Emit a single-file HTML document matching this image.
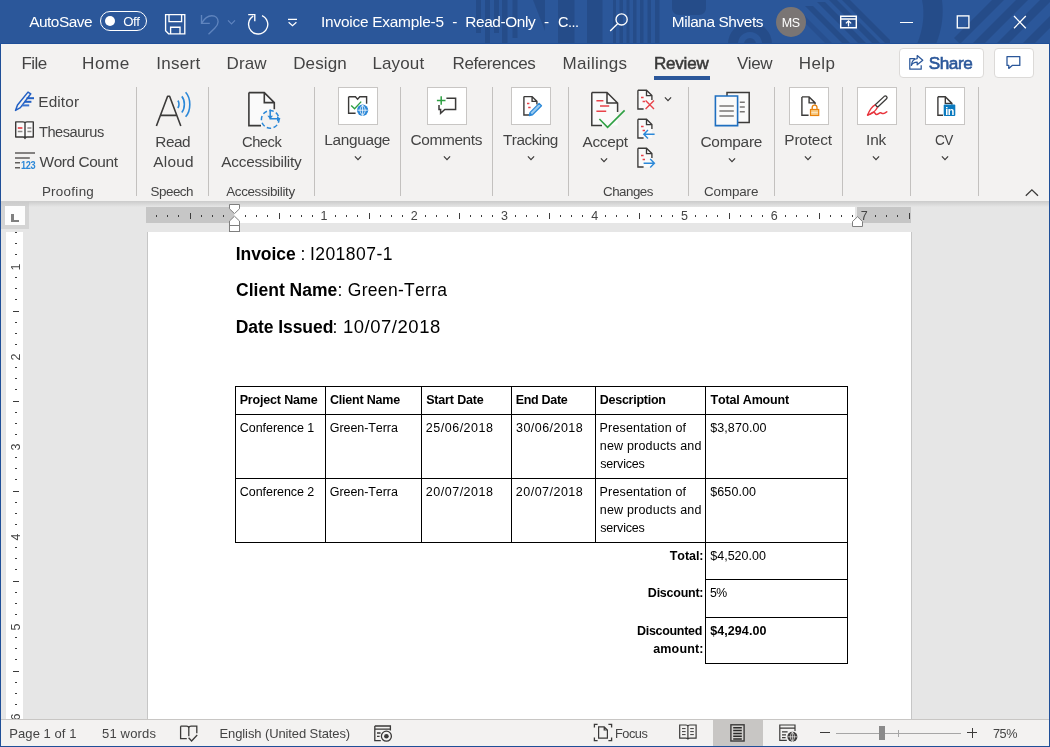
<!DOCTYPE html>
<html lang="en"><head><meta charset="utf-8"><title>Invoice Example-5 - Read-Only - Word</title>
<style>
html,body{margin:0;padding:0;}
body{width:1050px;height:747px;overflow:hidden;position:relative;background:#e6e6e6;font-family:"Liberation Sans", sans-serif;}
#app{position:absolute;left:0;top:0;width:1050px;height:747px;overflow:hidden;will-change:transform;}
#app span{display:block;font-kerning:none;}
</style></head><body><div id="app">
<div style="position:absolute;left:0px;top:0px;width:1050px;height:44px;background:#2b579a;"></div>
<div style="position:absolute;left:0px;top:44px;width:1050px;height:157px;background:#f3f2f1;"></div>
<div style="position:absolute;left:0px;top:201px;width:1050px;height:6px;background:linear-gradient(#cbcbcb,#e6e6e6);"></div>
<div style="position:absolute;left:0px;top:719px;width:1050px;height:28px;background:#f3f2f1;"></div>
<div style="position:absolute;left:0px;top:719px;width:1050px;height:1px;background:#c8c6c4;"></div>
<svg style="position:absolute;left:0px;top:0px;" width="1050" height="44" viewBox="0 0 1050 44" fill="none">
<g fill="#1d3c70" opacity="0.38">
<rect x="476" y="0" width="5" height="33"/><rect x="485" y="0" width="5" height="44"/><rect x="494" y="0" width="5" height="33"/><rect x="502" y="0" width="5.500" height="44"/><rect x="512.500" y="0" width="5" height="38"/>
<path d="M533 0h12v31z"/>
<rect x="558" y="0" width="16.500" height="44"/><rect x="587" y="0" width="15.500" height="44"/>
<rect x="613" y="0" width="3" height="44"/><rect x="619.500" y="0" width="3.500" height="44"/><rect x="626.500" y="0" width="3" height="44"/><rect x="633" y="0" width="3.500" height="44"/><rect x="640" y="0" width="3.500" height="44"/><rect x="647.500" y="0" width="3.500" height="44"/><rect x="655" y="0" width="4.500" height="44"/>
<path d="M672 0h34v8c0 4-3 7-7 7h-20c-4 0-7-3-7-7z"/>
<path d="M728 44a22 22 0 0 1 44 0h-10a12 12 0 0 0-24 0z"/><path d="M744 44a6 6 0 0 1 12 0z"/>
<path d="M805 6h8l38 38h-8z"/><path d="M817 2h8l42 42h-8z"/><path d="M829 0h8l44 44h-8z"/><path d="M842 0h8l40 40v4h-4z"/><path d="M796 14h7l30 30h-7z" opacity=".7"/>
<path d="M922 0h20c2 14 0 30-6 44h-19c6-14 8-30 5-44z"/>
<path d="M954 38l38-38h12l-44 44z"/><path d="M972 44l44-44h12l-44 44z"/><path d="M996 44l44-44h10v2l-42 42z"/><path d="M1022 44l28-28v12l-16 16z"/>
</g></svg>
<span style="position:absolute;left:29.27px;top:11.00px;font-size:15.4px;line-height:22px;font-weight:400;color:#fff;letter-spacing:-0.500px;white-space:pre;">AutoSave</span>
<div style="position:absolute;left:100px;top:11px;width:45px;height:18px;border:1.2px solid #fff;border-radius:11px;"></div>
<div style="position:absolute;left:104.500px;top:15.700px;width:10.500px;height:10.500px;border-radius:50%;background:#fff;"></div>
<span style="position:absolute;left:123.17px;top:12.02px;font-size:13.2px;line-height:19px;font-weight:400;color:#fff;letter-spacing:-0.448px;white-space:pre;">Off</span>
<svg style="position:absolute;left:164px;top:13px;" width="22" height="22" viewBox="0 0 22 22" fill="none"><path d="M1.6 1.6h19.2v19.2H4.6l-3-3z M5 1.6v7h12.6v-7 M6.6 20.8v-6.6h9.4v6.6" stroke="#fff" stroke-width="1.35"/></svg>
<svg style="position:absolute;left:199px;top:12px;" width="22" height="24" viewBox="0 0 22 24" fill="none"><path d="M2.5 3v8.3h8.3 M2.8 11c2.5-4.5 6-7.3 10-7.3 4 0 6.3 2.6 6.3 6 0 2.5-1.2 4.4-3.4 6.6l-6.2 6" stroke="#5f84be" stroke-width="1.35"/></svg>
<svg style="position:absolute;left:227px;top:19px;" width="9" height="7" viewBox="0 0 9 7" fill="none"><path d="M1 1.3l3.5 3.5L8 1.3" stroke="#5f84be" stroke-width="1.2"/></svg>
<svg style="position:absolute;left:246px;top:12px;" width="24" height="24" viewBox="0 0 24 24" fill="none"><path d="M7.2 4.2A9.6 9.6 0 1 0 16 3.6 M2.2 2.6h6.6v6.6" stroke="#fff" stroke-width="1.35"/></svg>
<svg style="position:absolute;left:287px;top:18px;" width="11" height="9" viewBox="0 0 11 9" fill="none"><path d="M1 1.4h9 M1.6 4.2l3.9 3.6 3.9-3.6" stroke="#fff" stroke-width="1.2"/></svg>
<span style="position:absolute;left:321.08px;top:11.00px;font-size:15.4px;line-height:22px;font-weight:400;color:#fff;letter-spacing:-0.232px;white-space:pre;">Invoice Example-5</span>
<span style="position:absolute;left:452.32px;top:11.00px;font-size:15.4px;line-height:22px;font-weight:400;color:#fff;letter-spacing:0.000px;white-space:pre;">-</span>
<span style="position:absolute;left:465.34px;top:11.00px;font-size:15.4px;line-height:22px;font-weight:400;color:#fff;letter-spacing:-0.402px;white-space:pre;">Read-Only</span>
<span style="position:absolute;left:544.12px;top:11.00px;font-size:15.4px;line-height:22px;font-weight:400;color:#fff;letter-spacing:0.000px;white-space:pre;">-</span>
<span style="position:absolute;left:557.86px;top:11.00px;font-size:15.4px;line-height:22px;font-weight:400;color:#fff;letter-spacing:-0.500px;white-space:pre;transform:scaleX(0.9423);transform-origin:0 0;">C...</span>
<svg style="position:absolute;left:609px;top:12px;" width="20" height="20" viewBox="0 0 20 20" fill="none"><circle cx="12.6" cy="7.4" r="5.6" stroke="#fff" stroke-width="1.35"/><path d="M8.8 11.4L1.2 19" stroke="#fff" stroke-width="1.35"/></svg>
<span style="position:absolute;left:671.74px;top:11.00px;font-size:15.4px;line-height:22px;font-weight:400;color:#fff;letter-spacing:-0.409px;white-space:pre;">Milana Shvets</span>
<div style="position:absolute;left:776px;top:7px;width:30px;height:30px;border-radius:50%;background:#7a7574;"></div>
<span style="position:absolute;left:781.77px;top:14.01px;font-size:12.5px;line-height:18px;font-weight:400;color:#fff;letter-spacing:-0.351px;white-space:pre;">MS</span>
<svg style="position:absolute;left:839px;top:15px;" width="19" height="14" viewBox="0 0 19 14" fill="none"><path d="M1.700 1.300h15.600v11.400H1.700z M1.700 4h15.600" stroke="#fff" stroke-width="1.450"/><path d="M9.500 11.400V6 M6.900 8.400l2.600-2.600L12.100 8.400" stroke="#fff" stroke-width="1.300"/></svg>
<div style="position:absolute;left:899.5px;top:22.2px;width:13px;height:1.3px;background:#fff;"></div>
<svg style="position:absolute;left:956px;top:15px;" width="15" height="15" viewBox="0 0 15 15" fill="none"><rect x="1.300" y="0.900" width="11.600" height="12" stroke="#fff" stroke-width="1.350"/></svg>
<svg style="position:absolute;left:1012px;top:15px;" width="16" height="15" viewBox="0 0 16 15" fill="none"><path d="M2 1l11.800 12.200 M13.800 1L2 13.200" stroke="#fff" stroke-width="1.300"/></svg>
<span style="position:absolute;left:21.41px;top:52.00px;font-size:17px;line-height:24px;font-weight:400;color:#444;letter-spacing:-0.500px;white-space:pre;">File</span>
<span style="position:absolute;left:82.39px;top:52.00px;font-size:17px;line-height:24px;font-weight:400;color:#444;letter-spacing:0.500px;white-space:pre;transform:scaleX(1.0112);transform-origin:0 0;">Home</span>
<span style="position:absolute;left:156.23px;top:52.00px;font-size:17px;line-height:24px;font-weight:400;color:#444;letter-spacing:0.275px;white-space:pre;">Insert</span>
<span style="position:absolute;left:226.61px;top:52.00px;font-size:17px;line-height:24px;font-weight:400;color:#444;letter-spacing:0.095px;white-space:pre;">Draw</span>
<span style="position:absolute;left:293.21px;top:52.00px;font-size:17px;line-height:24px;font-weight:400;color:#444;letter-spacing:0.116px;white-space:pre;">Design</span>
<span style="position:absolute;left:372.41px;top:52.00px;font-size:17px;line-height:24px;font-weight:400;color:#444;letter-spacing:0.136px;white-space:pre;">Layout</span>
<span style="position:absolute;left:452.61px;top:52.00px;font-size:17px;line-height:24px;font-weight:400;color:#444;letter-spacing:-0.414px;white-space:pre;">References</span>
<span style="position:absolute;left:562.61px;top:52.00px;font-size:17px;line-height:24px;font-weight:400;color:#444;letter-spacing:0.293px;white-space:pre;">Mailings</span>
<span style="position:absolute;left:736.93px;top:52.00px;font-size:17px;line-height:24px;font-weight:400;color:#444;letter-spacing:-0.405px;white-space:pre;">View</span>
<span style="position:absolute;left:798.81px;top:52.00px;font-size:17px;line-height:24px;font-weight:400;color:#444;letter-spacing:0.382px;white-space:pre;">Help</span>
<span style="position:absolute;left:653.91px;top:52.00px;font-size:17px;line-height:24px;font-weight:400;color:#3a3a3a;letter-spacing:-0.197px;white-space:pre;-webkit-text-stroke:0.55px #3a3a3a;">Review</span>
<div style="position:absolute;left:654px;top:76px;width:56px;height:3.5px;background:#2b579a;"></div>
<div style="position:absolute;left:899px;top:48px;width:82.500px;height:28px;border:1px solid #dcdad8;border-radius:4px;background:#fff;"></div>
<svg style="position:absolute;left:907.8px;top:54px;" width="17" height="17" viewBox="0 0 17 17" fill="none"><path d="M7 4.6H1.8v10.6h11.4v-4 M9.2 1.6l5.6 4.6-5.6 4.6V8.2c-3 0-4.8 1.2-5.8 3.2.2-4 2.4-6.4 5.8-6.8z" stroke="#2b579a" stroke-width="1.25" stroke-linejoin="round"/></svg>
<span style="position:absolute;left:928.72px;top:51.01px;font-size:17.2px;line-height:25px;font-weight:400;color:#2b579a;letter-spacing:-0.463px;white-space:pre;-webkit-text-stroke:0.6px #2b579a;">Share</span>
<div style="position:absolute;left:994px;top:48px;width:37.500px;height:28px;border:1px solid #dcdad8;border-radius:4px;background:#fff;"></div>
<svg style="position:absolute;left:1005px;top:55px;" width="17" height="15" viewBox="0 0 17 15" fill="none"><path d="M2 1.600h12.800v8.800H7.200L3.800 13.400V10.400H2z" stroke="#2b579a" stroke-width="1.3" stroke-linejoin="round"/></svg>
<div style="position:absolute;left:136px;top:87px;width:1px;height:109px;background:#c3c1bf;"></div>
<div style="position:absolute;left:208px;top:87px;width:1px;height:109px;background:#c3c1bf;"></div>
<div style="position:absolute;left:314px;top:87px;width:1px;height:109px;background:#c3c1bf;"></div>
<div style="position:absolute;left:400px;top:87px;width:1px;height:109px;background:#c3c1bf;"></div>
<div style="position:absolute;left:492px;top:87px;width:1px;height:109px;background:#c3c1bf;"></div>
<div style="position:absolute;left:568px;top:87px;width:1px;height:109px;background:#c3c1bf;"></div>
<div style="position:absolute;left:688px;top:87px;width:1px;height:109px;background:#c3c1bf;"></div>
<div style="position:absolute;left:774px;top:87px;width:1px;height:109px;background:#c3c1bf;"></div>
<div style="position:absolute;left:842px;top:87px;width:1px;height:109px;background:#c3c1bf;"></div>
<div style="position:absolute;left:910px;top:87px;width:1px;height:109px;background:#c3c1bf;"></div>
<div style="position:absolute;left:978px;top:87px;width:1px;height:109px;background:#c3c1bf;"></div>
<svg style="position:absolute;left:14px;top:90px;" width="22" height="22" viewBox="0 0 22 22" fill="none"><path d="M1.500 20.400l2-5.400L14 2.100l2.800 1.700L6.400 17.600z" stroke="#2260c4" stroke-width="1.500" stroke-linejoin="round" fill="#f3f2f1"/><path d="M12.600 8.200h7.400" stroke="#2260c4" stroke-width="2"/><path d="M10.600 11.800h6.800" stroke="#2260c4" stroke-width="2"/><path d="M8 15.400h7.200" stroke="#3a74d0" stroke-width="2"/></svg>
<span style="position:absolute;left:38.34px;top:91.00px;font-size:15.4px;line-height:22px;font-weight:400;color:#444;letter-spacing:0.098px;white-space:pre;">Editor</span>
<svg style="position:absolute;left:14px;top:120px;" width="22" height="21" viewBox="0 0 22 21" fill="none"><path d="M1.700 1.900h7.300c1.200 0 2 .5 2 1.400v15.200c0-.9-.8-1.500-2-1.500H1.700z M19.300 1.900H13c-1.200 0-2 .5-2 1.400v15.200c0-.9.8-1.500 2-1.500h6.300z" stroke="#3b3a39" stroke-width="1.400" fill="#fafafa" stroke-linejoin="round"/><path d="M3.800 8h4.600" stroke="#e8434a" stroke-width="1.700"/><path d="M3.800 11.600h4.600 M13.400 8h4 M13.400 11.600h4" stroke="#8a8886" stroke-width="1.500"/></svg>
<span style="position:absolute;left:39.27px;top:121.00px;font-size:15.4px;line-height:22px;font-weight:400;color:#444;letter-spacing:-0.500px;white-space:pre;transform:scaleX(0.9491);transform-origin:0 0;">Thesaurus</span>
<svg style="position:absolute;left:14px;top:150px;" width="22" height="20" viewBox="0 0 22 20" fill="none"><path d="M1 3h20 M1 8h14.800 M1 12.800h5 M1 17.800h5" stroke="#605e5c" stroke-width="1.600"/></svg>
<span style="position:absolute;left:20.92px;top:158.01px;font-size:10.6px;line-height:15px;font-weight:700;color:#2b88d8;letter-spacing:-0.500px;white-space:pre;transform:scaleX(0.8698);transform-origin:0 0;">123</span>
<span style="position:absolute;left:39.53px;top:151.00px;font-size:15.4px;line-height:22px;font-weight:400;color:#444;letter-spacing:-0.409px;white-space:pre;">Word Count</span>
<span style="position:absolute;left:41.90px;top:182.01px;font-size:13.4px;line-height:19px;font-weight:400;color:#444;letter-spacing:0.293px;white-space:pre;">Proofing</span>
<svg style="position:absolute;left:154px;top:90px;" width="40" height="38" viewBox="0 0 40 38" fill="none"><path d="M2.400 36L13.600 6.200h2L26.800 36 M6.800 25.400h15.600" stroke="#3b3a39" stroke-width="1.600" stroke-linejoin="round"/><path d="M23.800 10.600c1.600 1.800 1.600 5.400 0 7.400 M27.800 6.400c3.400 3.800 3.400 12 0 16 M31.600 2.200c5.600 6 5.600 18.400 0 24.600" stroke="#2b88d8" stroke-width="1.600"/></svg>
<span style="position:absolute;left:155.34px;top:131.00px;font-size:15.4px;line-height:22px;font-weight:400;color:#444;letter-spacing:-0.487px;white-space:pre;">Read</span>
<span style="position:absolute;left:153.37px;top:151.00px;font-size:15.4px;line-height:22px;font-weight:400;color:#444;letter-spacing:0.209px;white-space:pre;">Aloud</span>
<span style="position:absolute;left:150.59px;top:182.01px;font-size:13.4px;line-height:19px;font-weight:400;color:#444;letter-spacing:-0.500px;white-space:pre;">Speech</span>
<svg style="position:absolute;left:246px;top:90px;" width="38" height="42" viewBox="0 0 38 42" fill="none"><path d="M2.900 2.600h15.400l10 10v23H2.900z" fill="#fafafa"/><path d="M2.900 2.600h15.400l10 10v6.600 M18.300 2.600v10h10 M15 35.600H2.900V2.600" stroke="#3b3a39" stroke-width="1.600" fill="none"/><circle cx="24.200" cy="29.400" r="8.800" stroke="#2b88d8" stroke-width="1.500" stroke-dasharray="4.400 2.500" stroke-dashoffset="1" fill="#f3f2f1"/><path d="M24.200 19.600v9.200h9.600" stroke="#2b88d8" stroke-width="1.500"/><path d="M21.400 25.800l2.800 3.400 2.800-3.400z M31 26.200l3.600 2.600-3.600 2.600z" fill="#2b88d8"/></svg>
<span style="position:absolute;left:241.65px;top:131.00px;font-size:15.4px;line-height:22px;font-weight:400;color:#444;letter-spacing:-0.500px;white-space:pre;transform:scaleX(0.9562);transform-origin:0 0;">Check</span>
<span style="position:absolute;left:221.37px;top:151.00px;font-size:15.4px;line-height:22px;font-weight:400;color:#444;letter-spacing:-0.292px;white-space:pre;">Accessibility</span>
<span style="position:absolute;left:226.17px;top:182.01px;font-size:13.4px;line-height:19px;font-weight:400;color:#444;letter-spacing:-0.327px;white-space:pre;">Accessibility</span>
<div style="position:absolute;left:338px;top:87px;width:38px;height:36px;border:1px solid #c8c6c4;background:#fff;"></div>
<svg style="position:absolute;left:346px;top:94px;" width="24" height="24" viewBox="0 0 24 24" fill="none"><path d="M2.600 2.800h6.800l2.200 2.400 2.200-2.400h6.800v7 M2.600 2.800v16.400h7" stroke="#3b3a39" stroke-width="1.400"/><path d="M5.200 11.400l3.400 3.400 6.600-7.200" stroke="#2ea043" stroke-width="1.400"/><circle cx="16.600" cy="16.200" r="5.600" fill="#2b88d8"/><path d="M11.400 16.200h10.400 M16.600 11v10.400 M16.600 11c-3.400 3.200-3.400 7.200 0 10.400 M16.600 11c3.400 3.200 3.400 7.200 0 10.400" stroke="#fff" stroke-width=".8"/></svg>
<span style="position:absolute;left:324.34px;top:129.00px;font-size:15.4px;line-height:22px;font-weight:400;color:#444;letter-spacing:-0.339px;white-space:pre;">Language</span>
<svg style="position:absolute;left:351.6px;top:154.29999999999998px;" width="12" height="8" viewBox="0 0 12 8" fill="none"><path d="M2.9 2.45L6 5.55L9.1 2.45" stroke="#3b3a39" stroke-width="1.2"/></svg>
<div style="position:absolute;left:427px;top:87px;width:38px;height:36px;border:1px solid #c8c6c4;background:#fff;"></div>
<svg style="position:absolute;left:435px;top:94px;" width="24" height="22" viewBox="0 0 24 22" fill="none"><path d="M11.400 4.200h9.200v11.200H9.800L5.600 19.200v-3.800H4V11" stroke="#3b3a39" stroke-width="1.500"/><path d="M6.200 2.200v8.600 M1.900 6.500h8.600" stroke="#2ea043" stroke-width="1.500"/></svg>
<span style="position:absolute;left:410.62px;top:129.00px;font-size:15.4px;line-height:22px;font-weight:400;color:#444;letter-spacing:-0.373px;white-space:pre;">Comments</span>
<svg style="position:absolute;left:440.6px;top:154.29999999999998px;" width="12" height="8" viewBox="0 0 12 8" fill="none"><path d="M2.9 2.45L6 5.55L9.1 2.45" stroke="#3b3a39" stroke-width="1.2"/></svg>
<div style="position:absolute;left:511px;top:87px;width:38px;height:36px;border:1px solid #c8c6c4;background:#fff;"></div>
<svg style="position:absolute;left:521px;top:94px;" width="24" height="24" viewBox="0 0 24 24" fill="none"><path d="M2.900 2.600h8.200l4.800 4.800v3 M11.100 2.600v4.800h4.800 M8 21H2.900V2.600" stroke="#3b3a39" stroke-width="1.400" fill="none"/><path d="M6 9.600h2.400 M7.200 13.400h2.400" stroke="#e8434a" stroke-width="1.500"/><path d="M8.300 21.600l.8-3.200 9-9 2.400 2.400-9 9z" stroke="#2b88d8" stroke-width="1.250" fill="#9ccbf0" stroke-linejoin="round"/><path d="M8.300 21.600l.8-3.200 2.400 2.400z" fill="#2b88d8"/></svg>
<span style="position:absolute;left:503.26px;top:129.00px;font-size:15.4px;line-height:22px;font-weight:400;color:#444;letter-spacing:-0.500px;white-space:pre;transform:scaleX(0.9961);transform-origin:0 0;">Tracking</span>
<svg style="position:absolute;left:524.6px;top:154.29999999999998px;" width="12" height="8" viewBox="0 0 12 8" fill="none"><path d="M2.9 2.45L6 5.55L9.1 2.45" stroke="#3b3a39" stroke-width="1.2"/></svg>
<svg style="position:absolute;left:588px;top:90px;" width="40" height="40" viewBox="0 0 40 40" fill="none"><path d="M3.800 2.400h15.200l10.600 10.600v22.600H3.800z" fill="#fafafa"/><path d="M3.800 2.400h15.200l10.600 10.600v9 M19 2.400v10.600h10.600 M14 35.600H3.800V2.400" stroke="#3b3a39" stroke-width="1.500" fill="none"/><path d="M8.400 10.800h7 M12 16h9.200 M8.400 21.200h9.800" stroke="#e8434a" stroke-width="1.500"/><path d="M11.400 29l8.200 8.400 17-17" stroke="#2ea043" stroke-width="1.600" fill="none"/></svg>
<span style="position:absolute;left:582.47px;top:131.00px;font-size:15.4px;line-height:22px;font-weight:400;color:#444;letter-spacing:-0.307px;white-space:pre;">Accept</span>
<svg style="position:absolute;left:598.3px;top:155.89999999999998px;" width="12" height="8" viewBox="0 0 12 8" fill="none"><path d="M2.9 2.45L6 5.55L9.1 2.45" stroke="#3b3a39" stroke-width="1.2"/></svg>
<svg style="position:absolute;left:636px;top:89px;" width="20" height="22" viewBox="0 0 20 22" fill="none"><path d="M1.900 1.200h8.600l5.400 5.400v13.400H1.900z" fill="#fafafa"/><path d="M1.900 1.200h8.600l5.400 5.400v4.400 M10.500 1.200v5.400h5.400 M7.600 20H1.900V1.200" stroke="#3b3a39" stroke-width="1.350" fill="none"/><path d="M5 8.600h2.600 M6.600 12.400h2.400" stroke="#e8434a" stroke-width="1.500"/><path d="M9.600 11.600l8.400 8.400 M18 11.600l-8.400 8.400" stroke="#e8434a" stroke-width="1.400"/></svg>
<svg style="position:absolute;left:661.6px;top:95.3px;" width="12" height="8" viewBox="0 0 12 8" fill="none"><path d="M2.9 2.45L6 5.55L9.1 2.45" stroke="#3b3a39" stroke-width="1.2"/></svg>
<svg style="position:absolute;left:636px;top:118px;" width="20" height="22" viewBox="0 0 20 22" fill="none"><path d="M1.900 1.200h8.600l5.400 5.400v13.400H1.900z" fill="#fafafa"/><path d="M1.900 1.200h8.600l5.400 5.400v4.400 M10.500 1.200v5.400h5.400 M7.600 20H1.900V1.200" stroke="#3b3a39" stroke-width="1.350" fill="none"/><path d="M5 8.600h2.600 M6.600 12.400h2.400" stroke="#e8434a" stroke-width="1.500"/><path d="M18.600 16.200H8 M12 12l-4.200 4.200 4.200 4.200" stroke="#2b88d8" stroke-width="1.400"/></svg>
<svg style="position:absolute;left:636px;top:147px;" width="20" height="22" viewBox="0 0 20 22" fill="none"><path d="M1.900 1.200h8.600l5.400 5.400v13.400H1.900z" fill="#fafafa"/><path d="M1.900 1.200h8.600l5.400 5.400v4.400 M10.500 1.200v5.400h5.400 M7.600 20H1.900V1.200" stroke="#3b3a39" stroke-width="1.350" fill="none"/><path d="M5 8.600h2.600 M6.600 12.400h2.400" stroke="#e8434a" stroke-width="1.500"/><path d="M7.600 16.200h10.600 M14.200 12l4.200 4.200-4.200 4.200" stroke="#2b88d8" stroke-width="1.400"/></svg>
<span style="position:absolute;left:602.82px;top:182.01px;font-size:13.4px;line-height:19px;font-weight:400;color:#444;letter-spacing:-0.500px;white-space:pre;transform:scaleX(0.9965);transform-origin:0 0;">Changes</span>
<svg style="position:absolute;left:712px;top:90px;" width="40" height="38" viewBox="0 0 40 38" fill="none"><path d="M15 2.400h22.200v30.200H15z" fill="#fafafa" stroke="#3b3a39" stroke-width="1.500"/><path d="M27.800 12.200h5 M27.800 17h5 M27.800 21.800h5" stroke="#797775" stroke-width="1.400"/><path d="M3.400 6h22.200v29.600H3.400z" fill="#fafafa" stroke="#1e6fc0" stroke-width="1.600"/><path d="M7.400 16h14.400 M7.400 21h14.400 M7.400 26h14.400" stroke="#797775" stroke-width="1.500"/></svg>
<span style="position:absolute;left:700.42px;top:131.00px;font-size:15.4px;line-height:22px;font-weight:400;color:#444;letter-spacing:-0.212px;white-space:pre;">Compare</span>
<svg style="position:absolute;left:725.6px;top:155.89999999999998px;" width="12" height="8" viewBox="0 0 12 8" fill="none"><path d="M2.9 2.45L6 5.55L9.1 2.45" stroke="#3b3a39" stroke-width="1.2"/></svg>
<span style="position:absolute;left:704.02px;top:182.01px;font-size:13.4px;line-height:19px;font-weight:400;color:#444;letter-spacing:-0.123px;white-space:pre;">Compare</span>
<div style="position:absolute;left:789px;top:87px;width:38px;height:36px;border:1px solid #c8c6c4;background:#fff;"></div>
<svg style="position:absolute;left:799px;top:94px;" width="22" height="24" viewBox="0 0 22 24" fill="none"><path d="M2.900 2.900h7.200l6 6v1.600 M10.100 2.900v6h6 M9.600 21.200H2.900V2.900" stroke="#3b3a39" stroke-width="1.400" fill="none"/><path d="M13.200 15.400v-1.800c0-3.200 4.800-3.200 4.800 0v1.800" stroke="#e8820c" stroke-width="1.300"/><rect x="11.500" y="15.500" width="8.200" height="6" fill="#f7cb86" stroke="#e8820c" stroke-width="1.200"/><path d="M12.400 18.500h6.400" stroke="#fbe3bd" stroke-width="1"/></svg>
<span style="position:absolute;left:784.34px;top:129.00px;font-size:15.4px;line-height:22px;font-weight:400;color:#444;letter-spacing:-0.185px;white-space:pre;">Protect</span>
<svg style="position:absolute;left:802.4px;top:154.29999999999998px;" width="12" height="8" viewBox="0 0 12 8" fill="none"><path d="M2.9 2.45L6 5.55L9.1 2.45" stroke="#3b3a39" stroke-width="1.2"/></svg>
<div style="position:absolute;left:857px;top:87px;width:38px;height:36px;border:1px solid #c8c6c4;background:#fff;"></div>
<svg style="position:absolute;left:865px;top:94px;" width="24" height="24" viewBox="0 0 24 24" fill="none"><path d="M10.240 10.760L19.240 2.360A1.700 1.700 0 0 1 21.560 4.840L12.560 13.240z" stroke="#3b3a39" stroke-width="1.300" fill="#fff" stroke-linejoin="round"/><path d="M10.240 10.760C7 12.400 4.400 16.200 2.600 21.100 7.400 19.800 10.600 17 12.560 13.240" stroke="#e8343c" stroke-width="1.400" fill="none" stroke-linejoin="round"/><path d="M2.600 21.100C5 20.600 7.200 18 9 18.400s1 2.200 2.600 2.100 2.600-1.900 4-1.700 1.400 1 2.600.8 2.200-1 3.600-1.700" stroke="#e8343c" stroke-width="1.500" fill="none" stroke-linecap="round"/></svg>
<span style="position:absolute;left:866.08px;top:129.00px;font-size:15.4px;line-height:22px;font-weight:400;color:#444;letter-spacing:-0.222px;white-space:pre;">Ink</span>
<svg style="position:absolute;left:870.3px;top:154.29999999999998px;" width="12" height="8" viewBox="0 0 12 8" fill="none"><path d="M2.9 2.45L6 5.55L9.1 2.45" stroke="#3b3a39" stroke-width="1.2"/></svg>
<div style="position:absolute;left:925px;top:87px;width:38px;height:36px;border:1px solid #c8c6c4;background:#fff;"></div>
<svg style="position:absolute;left:935px;top:94px;" width="22" height="24" viewBox="0 0 22 24" fill="none"><path d="M2.900 2.800h7.400l6.600 6.600v1.400 M10.300 2.800v6.600h6.600 M8 21.200H2.900V2.800" stroke="#3b3a39" stroke-width="1.400" fill="none"/><rect x="8.700" y="10.600" width="11.600" height="11.500" rx="1" fill="#0a7abf"/></svg>
<span style="position:absolute;left:945.25px;top:103.01px;font-size:10.8px;line-height:16px;font-weight:700;color:#fff;letter-spacing:-0.474px;white-space:pre;">in</span>
<span style="position:absolute;left:935.41px;top:129.00px;font-size:15.4px;line-height:22px;font-weight:400;color:#444;letter-spacing:-0.500px;white-space:pre;transform:scaleX(0.8831);transform-origin:0 0;">CV</span>
<svg style="position:absolute;left:938.5px;top:154.29999999999998px;" width="12" height="8" viewBox="0 0 12 8" fill="none"><path d="M2.9 2.45L6 5.55L9.1 2.45" stroke="#3b3a39" stroke-width="1.2"/></svg>
<svg style="position:absolute;left:1024px;top:188px;" width="16" height="10" viewBox="0 0 16 10" fill="none"><path d="M1.800 7.800L7.900 1.900 14 7.800" stroke="#3b3a39" stroke-width="1.300"/></svg>
<div style="position:absolute;left:1px;top:202px;width:28px;height:27px;background:linear-gradient(#cccccc,#d4d4d4 20%);"></div>
<div style="position:absolute;left:5px;top:206px;width:20px;height:19px;background:#fdfdfd;"></div>
<svg style="position:absolute;left:11px;top:214px;" width="8" height="8" viewBox="0 0 8 8" fill="none"><path d="M0 0h3v6h5v2H0z" fill="#808080" shape-rendering="crispEdges"/></svg>
<div style="position:absolute;left:146px;top:207px;width:88px;height:16px;background:#c6c6c6;"></div>
<div style="position:absolute;left:234px;top:207px;width:621px;height:16px;background:#fff;"></div>
<div style="position:absolute;left:857px;top:207px;width:54px;height:16px;background:#c6c6c6;"></div>
<svg style="position:absolute;left:146px;top:207px;" width="765" height="16" viewBox="0 0 765 16" fill="none"><g fill="#3c3c3c" shape-rendering="crispEdges"><rect x="10" y="8" width="1" height="2"/><rect x="21" y="8" width="1" height="2"/><rect x="32" y="8" width="1" height="2"/><rect x="44" y="6" width="1" height="6"/><rect x="55" y="8" width="1" height="2"/><rect x="66" y="8" width="1" height="2"/><rect x="77" y="8" width="1" height="2"/><rect x="99" y="8" width="1" height="2"/><rect x="110" y="8" width="1" height="2"/><rect x="121" y="8" width="1" height="2"/><rect x="133" y="6" width="1" height="6"/><rect x="144" y="8" width="1" height="2"/><rect x="155" y="8" width="1" height="2"/><rect x="166" y="8" width="1" height="2"/><rect x="189" y="8" width="1" height="2"/><rect x="200" y="8" width="1" height="2"/><rect x="211" y="8" width="1" height="2"/><rect x="223" y="6" width="1" height="6"/><rect x="234" y="8" width="1" height="2"/><rect x="245" y="8" width="1" height="2"/><rect x="256" y="8" width="1" height="2"/><rect x="279" y="8" width="1" height="2"/><rect x="290" y="8" width="1" height="2"/><rect x="301" y="8" width="1" height="2"/><rect x="313" y="6" width="1" height="6"/><rect x="324" y="8" width="1" height="2"/><rect x="335" y="8" width="1" height="2"/><rect x="346" y="8" width="1" height="2"/><rect x="369" y="8" width="1" height="2"/><rect x="380" y="8" width="1" height="2"/><rect x="391" y="8" width="1" height="2"/><rect x="403" y="6" width="1" height="6"/><rect x="414" y="8" width="1" height="2"/><rect x="425" y="8" width="1" height="2"/><rect x="436" y="8" width="1" height="2"/><rect x="459" y="8" width="1" height="2"/><rect x="470" y="8" width="1" height="2"/><rect x="481" y="8" width="1" height="2"/><rect x="493" y="6" width="1" height="6"/><rect x="504" y="8" width="1" height="2"/><rect x="515" y="8" width="1" height="2"/><rect x="526" y="8" width="1" height="2"/><rect x="549" y="8" width="1" height="2"/><rect x="560" y="8" width="1" height="2"/><rect x="571" y="8" width="1" height="2"/><rect x="583" y="6" width="1" height="6"/><rect x="594" y="8" width="1" height="2"/><rect x="605" y="8" width="1" height="2"/><rect x="616" y="8" width="1" height="2"/><rect x="639" y="8" width="1" height="2"/><rect x="650" y="8" width="1" height="2"/><rect x="661" y="8" width="1" height="2"/><rect x="673" y="6" width="1" height="6"/><rect x="684" y="8" width="1" height="2"/><rect x="695" y="8" width="1" height="2"/><rect x="706" y="8" width="1" height="2"/><rect x="729" y="8" width="1" height="2"/><rect x="740" y="8" width="1" height="2"/><rect x="751" y="8" width="1" height="2"/><rect x="763" y="6" width="1" height="6"/></g></svg>
<span style="position:absolute;left:320.55px;top:207.01px;font-size:12.5px;line-height:18px;font-weight:400;color:#444;letter-spacing:0.000px;white-space:pre;">1</span>
<span style="position:absolute;left:410.87px;top:207.01px;font-size:12.5px;line-height:18px;font-weight:400;color:#444;letter-spacing:0.000px;white-space:pre;">2</span>
<span style="position:absolute;left:501.02px;top:207.01px;font-size:12.5px;line-height:18px;font-weight:400;color:#444;letter-spacing:0.000px;white-space:pre;">3</span>
<span style="position:absolute;left:591.21px;top:207.01px;font-size:12.5px;line-height:18px;font-weight:400;color:#444;letter-spacing:0.000px;white-space:pre;">4</span>
<span style="position:absolute;left:681.00px;top:207.01px;font-size:12.5px;line-height:18px;font-weight:400;color:#444;letter-spacing:0.000px;white-space:pre;">5</span>
<span style="position:absolute;left:770.87px;top:207.01px;font-size:12.5px;line-height:18px;font-weight:400;color:#444;letter-spacing:0.000px;white-space:pre;">6</span>
<span style="position:absolute;left:860.86px;top:207.01px;font-size:12.5px;line-height:18px;font-weight:400;color:#444;letter-spacing:0.000px;white-space:pre;">7</span>
<svg style="position:absolute;left:229px;top:204px;" width="11" height="28" viewBox="0 0 11 28" fill="none"><path d="M.5.500h10v4.300L5.500 9.600.500 4.800z" fill="#fff" stroke="#7f7f7f" stroke-width="1"/><path d="M5.500 12.200l5 4.800v4.500H.500v-4.500z" fill="#fff" stroke="#7f7f7f" stroke-width="1"/><rect x=".5" y="21.500" width="10" height="6" fill="#fff" stroke="#7f7f7f" stroke-width="1"/></svg>
<svg style="position:absolute;left:852px;top:215.5px;" width="11" height="12" viewBox="0 0 11 12" fill="none"><path d="M5.500 .7l5 4.800v5H.500v-5z" fill="#fff" stroke="#7f7f7f" stroke-width="1"/></svg>
<div style="position:absolute;left:6px;top:232px;width:17px;height:487px;background:#fff;"></div>
<svg style="position:absolute;left:6px;top:232px;" width="17" height="487" viewBox="0 0 17 487" fill="none"><g fill="#3c3c3c" shape-rendering="crispEdges"><rect x="9" y="0" width="2" height="1"/><rect x="9" y="11" width="2" height="1"/><rect x="9" y="22" width="2" height="1"/><rect x="9" y="45" width="2" height="1"/><rect x="9" y="56" width="2" height="1"/><rect x="9" y="67" width="2" height="1"/><rect x="7" y="79" width="6" height="1"/><rect x="9" y="90" width="2" height="1"/><rect x="9" y="101" width="2" height="1"/><rect x="9" y="112" width="2" height="1"/><rect x="9" y="135" width="2" height="1"/><rect x="9" y="146" width="2" height="1"/><rect x="9" y="157" width="2" height="1"/><rect x="7" y="169" width="6" height="1"/><rect x="9" y="180" width="2" height="1"/><rect x="9" y="191" width="2" height="1"/><rect x="9" y="202" width="2" height="1"/><rect x="9" y="225" width="2" height="1"/><rect x="9" y="236" width="2" height="1"/><rect x="9" y="247" width="2" height="1"/><rect x="7" y="259" width="6" height="1"/><rect x="9" y="270" width="2" height="1"/><rect x="9" y="281" width="2" height="1"/><rect x="9" y="292" width="2" height="1"/><rect x="9" y="315" width="2" height="1"/><rect x="9" y="326" width="2" height="1"/><rect x="9" y="337" width="2" height="1"/><rect x="7" y="349" width="6" height="1"/><rect x="9" y="360" width="2" height="1"/><rect x="9" y="371" width="2" height="1"/><rect x="9" y="382" width="2" height="1"/><rect x="9" y="405" width="2" height="1"/><rect x="9" y="416" width="2" height="1"/><rect x="9" y="427" width="2" height="1"/><rect x="7" y="439" width="6" height="1"/><rect x="9" y="450" width="2" height="1"/><rect x="9" y="461" width="2" height="1"/><rect x="9" y="472" width="2" height="1"/></g></svg>
<span style="position:absolute;left:5.500px;top:257.5px;width:20px;height:18px;line-height:18px;text-align:center;font-size:12.500px;color:#444;transform:rotate(-90deg);">1</span>
<span style="position:absolute;left:5.500px;top:347.5px;width:20px;height:18px;line-height:18px;text-align:center;font-size:12.500px;color:#444;transform:rotate(-90deg);">2</span>
<span style="position:absolute;left:5.500px;top:437.5px;width:20px;height:18px;line-height:18px;text-align:center;font-size:12.500px;color:#444;transform:rotate(-90deg);">3</span>
<span style="position:absolute;left:5.500px;top:527.5px;width:20px;height:18px;line-height:18px;text-align:center;font-size:12.500px;color:#444;transform:rotate(-90deg);">4</span>
<span style="position:absolute;left:5.500px;top:617.5px;width:20px;height:18px;line-height:18px;text-align:center;font-size:12.500px;color:#444;transform:rotate(-90deg);">5</span>
<span style="position:absolute;left:5.500px;top:707.5px;width:20px;height:18px;line-height:18px;text-align:center;font-size:12.500px;color:#444;transform:rotate(-90deg);">6</span>
<div style="position:absolute;left:147px;top:232px;width:765px;height:487px;background:#fff;border-left:1px solid #c6c6c6;border-right:1px solid #c6c6c6;box-sizing:border-box;"></div>
<span style="position:absolute;left:235.63px;top:242.01px;font-size:17.5px;line-height:25px;font-weight:700;color:#000;letter-spacing:-0.022px;white-space:pre;">Invoice</span>
<span style="position:absolute;left:300.40px;top:242.01px;font-size:17.5px;line-height:25px;font-weight:400;color:#000;letter-spacing:0.000px;white-space:pre;">:</span>
<span style="position:absolute;left:309.89px;top:242.01px;font-size:17.5px;line-height:25px;font-weight:400;color:#000;letter-spacing:0.469px;white-space:pre;">I201807-1</span>
<span style="position:absolute;left:236.08px;top:278.01px;font-size:17.5px;line-height:25px;font-weight:700;color:#000;letter-spacing:0.008px;white-space:pre;">Client Name</span>
<span style="position:absolute;left:337.40px;top:278.01px;font-size:17.5px;line-height:25px;font-weight:400;color:#000;letter-spacing:0.000px;white-space:pre;">:</span>
<span style="position:absolute;left:347.82px;top:278.01px;font-size:17.5px;line-height:25px;font-weight:400;color:#000;letter-spacing:0.290px;white-space:pre;">Green-Terra</span>
<span style="position:absolute;left:235.63px;top:315.01px;font-size:17.5px;line-height:25px;font-weight:700;color:#000;letter-spacing:-0.051px;white-space:pre;">Date Issued</span>
<span style="position:absolute;left:332.60px;top:315.01px;font-size:17.5px;line-height:25px;font-weight:400;color:#000;letter-spacing:0.000px;white-space:pre;">:</span>
<span style="position:absolute;left:342.79px;top:315.01px;font-size:17.5px;line-height:25px;font-weight:400;color:#000;letter-spacing:0.500px;white-space:pre;transform:scaleX(1.0557);transform-origin:0 0;">10/07/2018</span>
<div style="position:absolute;left:235px;top:386px;width:613px;height:1px;background:#000;"></div>
<div style="position:absolute;left:235px;top:414px;width:613px;height:1px;background:#000;"></div>
<div style="position:absolute;left:235px;top:478px;width:613px;height:1px;background:#000;"></div>
<div style="position:absolute;left:235px;top:542px;width:613px;height:1px;background:#000;"></div>
<div style="position:absolute;left:235px;top:386px;width:1px;height:157px;background:#000;"></div>
<div style="position:absolute;left:325px;top:386px;width:1px;height:157px;background:#000;"></div>
<div style="position:absolute;left:421px;top:386px;width:1px;height:157px;background:#000;"></div>
<div style="position:absolute;left:511px;top:386px;width:1px;height:157px;background:#000;"></div>
<div style="position:absolute;left:595px;top:386px;width:1px;height:157px;background:#000;"></div>
<div style="position:absolute;left:705px;top:386px;width:1px;height:278px;background:#000;"></div>
<div style="position:absolute;left:847px;top:386px;width:1px;height:278px;background:#000;"></div>
<div style="position:absolute;left:705px;top:579px;width:143px;height:1px;background:#000;"></div>
<div style="position:absolute;left:705px;top:617px;width:143px;height:1px;background:#000;"></div>
<div style="position:absolute;left:705px;top:663px;width:143px;height:1px;background:#000;"></div>
<span style="position:absolute;left:239.66px;top:391.01px;font-size:12.5px;line-height:18px;font-weight:700;color:#000;letter-spacing:-0.167px;white-space:pre;">Project Name</span>
<span style="position:absolute;left:329.89px;top:391.01px;font-size:12.5px;line-height:18px;font-weight:700;color:#000;letter-spacing:-0.200px;white-space:pre;">Client Name</span>
<span style="position:absolute;left:426.14px;top:391.01px;font-size:12.5px;line-height:18px;font-weight:700;color:#000;letter-spacing:-0.151px;white-space:pre;">Start Date</span>
<span style="position:absolute;left:515.66px;top:391.01px;font-size:12.5px;line-height:18px;font-weight:700;color:#000;letter-spacing:-0.287px;white-space:pre;">End Date</span>
<span style="position:absolute;left:599.76px;top:391.01px;font-size:12.5px;line-height:18px;font-weight:700;color:#000;letter-spacing:-0.255px;white-space:pre;">Description</span>
<span style="position:absolute;left:710.46px;top:391.01px;font-size:12.5px;line-height:18px;font-weight:700;color:#000;letter-spacing:-0.168px;white-space:pre;">Total Amount</span>
<span style="position:absolute;left:239.87px;top:419.01px;font-size:12.5px;line-height:18px;font-weight:400;color:#000;letter-spacing:-0.064px;white-space:pre;">Conference 1</span>
<span style="position:absolute;left:329.77px;top:419.01px;font-size:12.5px;line-height:18px;font-weight:400;color:#000;letter-spacing:-0.064px;white-space:pre;">Green-Terra</span>
<span style="position:absolute;left:425.87px;top:419.01px;font-size:12.5px;line-height:18px;font-weight:400;color:#000;letter-spacing:0.500px;white-space:pre;">25/06/2018</span>
<span style="position:absolute;left:516.02px;top:419.01px;font-size:12.5px;line-height:18px;font-weight:400;color:#000;letter-spacing:0.462px;white-space:pre;">30/06/2018</span>
<span style="position:absolute;left:599.57px;top:419.01px;font-size:12.5px;line-height:18px;font-weight:400;color:#000;letter-spacing:0.173px;white-space:pre;">Presentation of</span>
<span style="position:absolute;left:599.77px;top:437.01px;font-size:12.5px;line-height:18px;font-weight:400;color:#000;letter-spacing:0.197px;white-space:pre;">new products and</span>
<span style="position:absolute;left:600.25px;top:455.01px;font-size:12.5px;line-height:18px;font-weight:400;color:#000;letter-spacing:-0.178px;white-space:pre;">services</span>
<span style="position:absolute;left:710.27px;top:419.01px;font-size:12.5px;line-height:18px;font-weight:400;color:#000;letter-spacing:0.077px;white-space:pre;">$3,870.00</span>
<span style="position:absolute;left:239.87px;top:483.01px;font-size:12.5px;line-height:18px;font-weight:400;color:#000;letter-spacing:-0.062px;white-space:pre;">Conference 2</span>
<span style="position:absolute;left:329.77px;top:483.01px;font-size:12.5px;line-height:18px;font-weight:400;color:#000;letter-spacing:-0.064px;white-space:pre;">Green-Terra</span>
<span style="position:absolute;left:425.87px;top:483.01px;font-size:12.5px;line-height:18px;font-weight:400;color:#000;letter-spacing:0.500px;white-space:pre;">20/07/2018</span>
<span style="position:absolute;left:515.87px;top:483.01px;font-size:12.5px;line-height:18px;font-weight:400;color:#000;letter-spacing:0.479px;white-space:pre;">20/07/2018</span>
<span style="position:absolute;left:599.57px;top:483.01px;font-size:12.5px;line-height:18px;font-weight:400;color:#000;letter-spacing:0.173px;white-space:pre;">Presentation of</span>
<span style="position:absolute;left:599.77px;top:501.01px;font-size:12.5px;line-height:18px;font-weight:400;color:#000;letter-spacing:0.197px;white-space:pre;">new products and</span>
<span style="position:absolute;left:600.25px;top:519.01px;font-size:12.5px;line-height:18px;font-weight:400;color:#000;letter-spacing:-0.178px;white-space:pre;">services</span>
<span style="position:absolute;left:710.27px;top:483.01px;font-size:12.5px;line-height:18px;font-weight:400;color:#000;letter-spacing:0.090px;white-space:pre;">$650.00</span>
<span style="position:absolute;left:669.76px;top:547.01px;font-size:12.5px;line-height:18px;font-weight:700;color:#000;letter-spacing:-0.056px;white-space:pre;">Total:</span>
<span style="position:absolute;left:710.27px;top:547.01px;font-size:12.5px;line-height:18px;font-weight:400;color:#000;letter-spacing:0.002px;white-space:pre;">$4,520.00</span>
<span style="position:absolute;left:647.86px;top:584.01px;font-size:12.5px;line-height:18px;font-weight:700;color:#000;letter-spacing:-0.250px;white-space:pre;">Discount:</span>
<span style="position:absolute;left:709.91px;top:584.01px;font-size:12.5px;line-height:18px;font-weight:400;color:#000;letter-spacing:-0.500px;white-space:pre;transform:scaleX(0.9807);transform-origin:0 0;">5%</span>
<span style="position:absolute;left:637.06px;top:622.01px;font-size:12.5px;line-height:18px;font-weight:700;color:#000;letter-spacing:-0.311px;white-space:pre;">Discounted</span>
<span style="position:absolute;left:653.23px;top:640.01px;font-size:12.5px;line-height:18px;font-weight:700;color:#000;letter-spacing:0.162px;white-space:pre;">amount:</span>
<span style="position:absolute;left:710.24px;top:622.01px;font-size:12.5px;line-height:18px;font-weight:700;color:#000;letter-spacing:0.071px;white-space:pre;">$4,294.00</span>
<div style="position:absolute;left:0px;top:719px;width:1050px;height:28px;background:#f3f2f1;"></div>
<div style="position:absolute;left:0px;top:719px;width:1050px;height:1px;background:#c8c6c4;"></div>
<span style="position:absolute;left:9.33px;top:724.01px;font-size:13px;line-height:19px;font-weight:400;color:#444;letter-spacing:0.060px;white-space:pre;">Page 1 of 1</span>
<span style="position:absolute;left:101.98px;top:724.01px;font-size:13px;line-height:19px;font-weight:400;color:#444;letter-spacing:0.177px;white-space:pre;">51 words</span>
<svg style="position:absolute;left:179px;top:724px;" width="20" height="19" viewBox="0 0 20 19" fill="none"><path d="M1.600 2.200h5.800c1.400 0 2.400.8 2.400 2 0-1.200 1-2 2.400-2h5.600v7 M1.600 2.200v12.400h6.200 M9.800 4.200v8" stroke="#3b3a39" stroke-width="1.300"/><path d="M9.600 13.800l3 3.200 5.600-6" stroke="#3b3a39" stroke-width="1.300"/></svg>
<span style="position:absolute;left:219.53px;top:724.01px;font-size:13px;line-height:19px;font-weight:400;color:#444;letter-spacing:-0.104px;white-space:pre;">English (United States)</span>
<svg style="position:absolute;left:373px;top:724px;" width="20" height="19" viewBox="0 0 20 19" fill="none"><path d="M1.800 2h15.600v4.600 M1.800 2v14.600h6 M1.800 5.200h15.600 M4 9h3.600 M4 12.400h2.600" stroke="#3b3a39" stroke-width="1.300"/><circle cx="13.400" cy="12.200" r="5" stroke="#3b3a39" stroke-width="1.300"/><circle cx="13.400" cy="12.200" r="2.300" fill="#3b3a39"/></svg>
<svg style="position:absolute;left:592px;top:722px;" width="22" height="21" viewBox="0 0 22 21" fill="none"><path d="M2.400 5.600V2.400h3.200 M16.400 2.400h3.200v3.200 M19.600 15.400v3.200h-3.200 M5.600 18.600H2.400v-3.200" stroke="#3b3a39" stroke-width="1.300"/><path d="M6.600 4.800h5.600l3.200 3.200v8.200H6.600z M12.200 4.800v3.200h3.200" stroke="#3b3a39" stroke-width="1.200"/></svg>
<span style="position:absolute;left:614.95px;top:724.01px;font-size:13px;line-height:19px;font-weight:400;color:#444;letter-spacing:-0.500px;white-space:pre;transform:scaleX(0.9823);transform-origin:0 0;">Focus</span>
<svg style="position:absolute;left:678px;top:723px;" width="20" height="19" viewBox="0 0 20 19" fill="none"><path d="M1.700 2h6.200c1.200 0 2 .6 2 1.600v13c0-1-.8-1.400-2-1.400H1.700z M18.100 2h-6.200c-1.200 0-2 .6-2 1.600v13c0-1 .8-1.400 2-1.400h6.200z" stroke="#3b3a39" stroke-width="1.200"/><path d="M4 5.600h3.600 M4 8.600h3.600 M4 11.600h3.600 M12.200 5.600h3.600 M12.200 8.600h3.600 M12.200 11.600h3.600" stroke="#3b3a39" stroke-width="1"/></svg>
<div style="position:absolute;left:713px;top:720px;width:50px;height:26px;background:#c8c6c4;"></div>
<svg style="position:absolute;left:729px;top:723px;" width="17" height="20" viewBox="0 0 17 20" fill="none"><rect x="1.900" y="1.800" width="13.200" height="16.200" stroke="#3b3a39" stroke-width="1.400" fill="#d2d0ce"/><path d="M4.200 4.800h8.600 M4.200 7.600h8.600 M4.200 10.400h8.600 M4.200 13.200h8.600 M4.200 16h8.600" stroke="#2b2a29" stroke-width="1.500"/></svg>
<svg style="position:absolute;left:778px;top:723px;" width="21" height="20" viewBox="0 0 21 20" fill="none"><path d="M17 8V2H1.800v15.400h7 M1.800 5.200H17 M4 8.800h5.600 M4 11.800h4 M4 14.600h3.600" stroke="#3b3a39" stroke-width="1.200"/><circle cx="14.400" cy="13.800" r="5" fill="#3b3a39"/><path d="M9.600 13.800h9.600 M14.400 9v9.600 M14.400 9c-2.800 3-2.800 6.600 0 9.600 M14.400 9c2.800 3 2.800 6.600 0 9.600" stroke="#f3f2f1" stroke-width=".7"/></svg>
<div style="position:absolute;left:820px;top:732px;width:10px;height:1.3px;background:#3b3a39;"></div>
<div style="position:absolute;left:836px;top:733px;width:125px;height:1px;background:#a6a6a6;"></div>
<div style="position:absolute;left:898px;top:730px;width:1px;height:7px;background:#a6a6a6;"></div>
<div style="position:absolute;left:879px;top:726px;width:6px;height:14px;background:#8a8a8a;"></div>
<div style="position:absolute;left:967px;top:732px;width:10px;height:1.3px;background:#3b3a39;"></div>
<div style="position:absolute;left:971.5px;top:728px;width:1.2px;height:10px;background:#3b3a39;"></div>
<span style="position:absolute;left:993.35px;top:724.01px;font-size:13px;line-height:19px;font-weight:400;color:#444;letter-spacing:-0.500px;white-space:pre;transform:scaleX(0.9753);transform-origin:0 0;">75%</span>
<div style="position:absolute;left:0px;top:43px;width:1050px;height:1px;background:#1f4f98;"></div>
<div style="position:absolute;left:0px;top:44px;width:1px;height:703px;background:#1f4f98;"></div>
<div style="position:absolute;left:1049px;top:44px;width:1px;height:703px;background:#1f4f98;"></div>
<div style="position:absolute;left:0px;top:746px;width:1050px;height:1px;background:#1f4f98;"></div>
</div></body></html>
